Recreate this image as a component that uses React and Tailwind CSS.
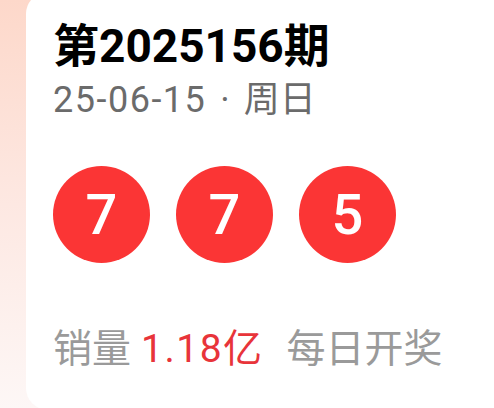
export default function App() {
  const font = { fontFamily: 'Roboto, "Noto Sans CJK SC", sans-serif' };
  return (
    <div className="w-[494px] h-[408px] overflow-hidden bg-gradient-to-b from-[#fdd8ca] via-[#fde8e2] to-[#fdf7f6] flex">
      <div className="w-[26px] shrink-0" />
      <div
        className="flex-1 bg-white rounded-l-[22px] -mt-[8px] h-[418px] pl-[27px] pt-[28px] flex flex-col"
        style={font}
      >
        <div className="text-[46px] leading-[52px] font-bold text-black">第2025156期</div>
        <div className="text-[36px] leading-[40px] text-[#6b6b6b] mt-[8px] flex items-baseline">
          <span className="tracking-[1.5px]">25-06-15</span>
          <span className="ml-[14px]">·</span>
          <span className="ml-[14px]">周日</span>
        </div>
        <div className="flex gap-[26px] mt-[46px]">
          {["7", "7", "5"].map((n, i) => (
            <div
              key={i}
              className="w-[97px] h-[97px] rounded-full bg-[#fb3535] flex items-center justify-center text-white text-[56px] font-medium"
            >
              {n}
            </div>
          ))}
        </div>
        <div className="mt-[63px] text-[39px] leading-[46px] text-[#9a9a9a] flex items-baseline">
          <span>销量</span>
          <span className="text-[#e8343a] ml-[10px] tracking-[1.5px]">1.18亿</span>
          <span className="ml-[23px]">每日开奖</span>
        </div>
      </div>
    </div>
  );
}
